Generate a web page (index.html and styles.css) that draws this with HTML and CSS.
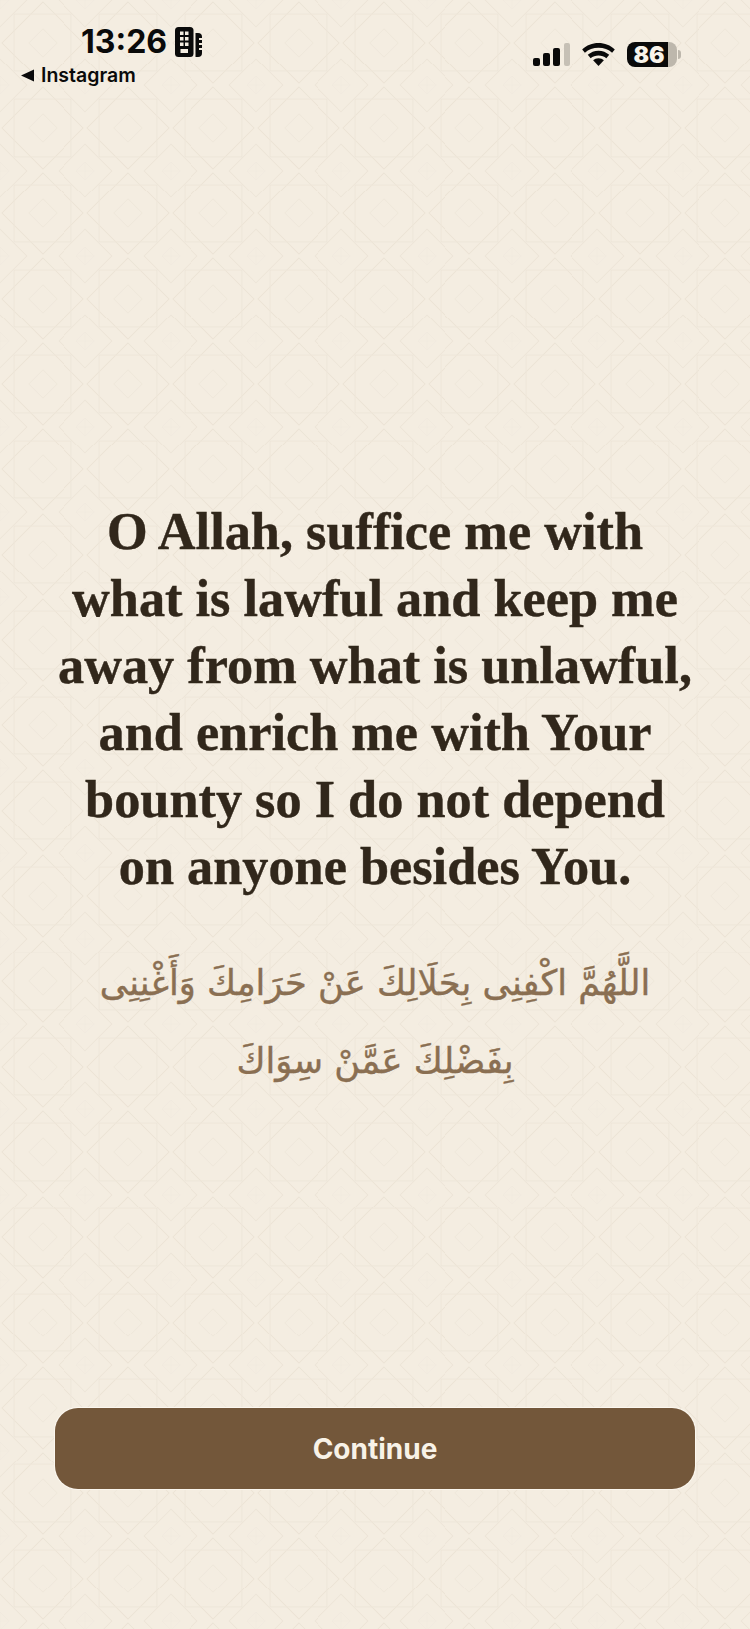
FILE: index.html
```html
<!DOCTYPE html>
<html lang="en">
<head>
    <meta charset="UTF-8">
    <meta name="viewport" content="width=device-width, initial-scale=1.0">
    <title>Dua</title>
    <link rel="stylesheet" href="styles.css">
</head>
<body>
    <div class="status-bar">
        <div class="status-left">
            <div class="time-row">
                <span class="time">13:26</span>
                <svg class="building" width="27" height="30" viewBox="0 0 27 30">
                    <rect x="0" y="0" width="18.500" height="30" rx="3.500" fill="#0a0a0a"/>
                    <path fill="#0a0a0a" d="M20.500 6h2.500a4 4 0 0 1 4 4v16a4 4 0 0 1-4 4h-2.500z"/>
                    <g fill="#f4ede1">
                        <rect x="5" y="4.500" width="3.500" height="3.500"/><rect x="10" y="4.500" width="3.500" height="3.500"/>
                        <rect x="5" y="10" width="3.500" height="3.500"/><rect x="10" y="10" width="3.500" height="3.500"/>
                        <rect x="5" y="15.500" width="3.500" height="3.500"/><rect x="10" y="15.500" width="3.500" height="3.500"/>
                        <rect x="5.500" y="22" width="7.500" height="4"/>
                        <rect x="24" y="11" width="3" height="2"/><rect x="24" y="16" width="3" height="2"/><rect x="24" y="21" width="3" height="2"/>
                    </g>
                </svg>
            </div>
            <div class="back-row">
                <svg width="13" height="13" viewBox="0 0 12 12"><path fill="#0a0a0a" d="M12 .500v11L0 6z"/></svg>
                <span>Instagram</span>
            </div>
        </div>
        <div class="status-right">
            <svg width="37" height="23" viewBox="0 0 37 23">
                <rect x="0" y="15" width="7" height="8" rx="2" fill="#0a0a0a"/>
                <rect x="10" y="10" width="7" height="13" rx="2" fill="#0a0a0a"/>
                <rect x="20" y="5" width="7" height="18" rx="2" fill="#0a0a0a"/>
                <rect x="31" y="0" width="6" height="23" rx="2" fill="#c6c0b5"/>
            </svg>
            <svg width="33" height="23" viewBox="0 0 34 24">
                <path fill="#0a0a0a" d="M17 0c6.500 0 12.500 2.500 17 6.700l-2.800 3.500C27.500 6.800 22.500 5 17 5S6.500 6.800 2.800 10.200L0 6.700C4.500 2.500 10.500 0 17 0z"/>
                <path fill="#0a0a0a" d="M17 8c4.300 0 8.100 1.600 11.200 4.300l-3 3.500C23 14 20.100 13 17 13s-6 1-8.200 2.800l-3-3.500C8.900 9.600 12.700 8 17 8z"/>
                <path fill="#0a0a0a" d="M17 16c2.200 0 4.200.800 5.600 2.100L17 24l-5.600-5.900c1.400-1.300 3.400-2.100 5.600-2.100z"/>
            </svg>
            <div class="battery">
                <div class="battery-body"><span>86</span></div>
                <div class="battery-tip"></div>
            </div>
        </div>
    </div>

    <main class="content">
        <h1 class="dua-english">O Allah, suffice me with<br>what is lawful and keep me<br>away from what is unlawful,<br>and enrich me with Your<br>bounty so I do not depend<br>on anyone besides You.</h1>
        <p class="dua-arabic" lang="ar" dir="rtl">اللَّهُمَّ اكْفِنِى بِحَلَالِكَ عَنْ حَرَامِكَ وَأَغْنِنِى<br>بِفَضْلِكَ عَمَّنْ سِوَاكَ</p>
    </main>

    <div class="footer">
        <button type="button" class="continue-btn">Continue</button>
    </div>
</body>
</html>
```

FILE: styles.css
```css
html, body {
    margin: 0;
    padding: 0;
}
body {
    width: 750px;
    height: 1629px;
    overflow: hidden;
    display: flex;
    flex-direction: column;
    background-color: #f4ede1;
    background-image: url("data:image/svg+xml,%3Csvg xmlns='http://www.w3.org/2000/svg' width='85.333' height='85.333' viewBox='0 0 256 256'%3E%3Cg fill='none' stroke-width='3'%3E%3Cpath stroke='%23ebe3d5' d='M128 6L250 128L128 250L6 128Z'/%3E%3Crect stroke='%23eee6d9' x='42' y='42' width='172' height='172'/%3E%3Cpath stroke='%23efe8db' d='M128 86L170 128L128 170L86 128Z'/%3E%3Cg stroke='%23ede5d8'%3E%3Cpath d='M0 -80L80 0L0 80L-80 0Z'/%3E%3Cpath d='M256 -80L336 0L256 80L176 0Z'/%3E%3Cpath d='M0 176L80 256L0 336L-80 256Z'/%3E%3Cpath d='M256 176L336 256L256 336L176 256Z'/%3E%3C/g%3E%3Cg stroke='%23f0e9de' stroke-width='2'%3E%3Cpath d='M0 -27L27 0L0 27L-27 0Z M-27 0H27 M0 -27V27'/%3E%3Cpath d='M256 -27L283 0L256 27L229 0Z M229 0H283 M256 -27V27'/%3E%3Cpath d='M0 229L27 256L0 283L-27 256Z M-27 256H27 M0 229V283'/%3E%3Cpath d='M256 229L283 256L256 283L229 256Z M229 256H283 M256 229V283'/%3E%3C/g%3E%3C/g%3E%3C/svg%3E");
    background-size: 85.333px 85.333px;
    font-family: Inter, "Liberation Sans", sans-serif;
    color: #0a0a0a;
}
.status-bar {
    display: flex;
    justify-content: space-between;
    align-items: flex-start;
    padding: 27px 69px 0 21px;
}
.time-row {
    display: flex;
    align-items: center;
    gap: 8px;
    padding-left: 60px;
}
.time {
    font-size: 32px;
    font-weight: 700;
    line-height: 30px;
}
.back-row {
    display: flex;
    align-items: center;
    gap: 7px;
    margin-top: 7px;
    font-size: 19.500px;
    font-weight: 600;
    line-height: 22px;
}
.status-right {
    display: flex;
    align-items: center;
    gap: 12px;
    padding-top: 15px;
}
.battery {
    display: flex;
    align-items: center;
    gap: 1px;
}
.battery-body {
    width: 50px;
    height: 25px;
    border-radius: 8px;
    background: linear-gradient(90deg, #0a0a0a 0 83%, #bdb7ac 83%);
    display: flex;
    align-items: center;
    justify-content: center;
    padding-right: 6px;
    box-sizing: border-box;
    color: #f8f3ea;
    font-size: 23px;
    font-weight: 900;
}
.battery-tip {
    width: 3px;
    height: 9px;
    border-radius: 0 3px 3px 0;
    background-color: #bdb7ac;
}
.content {
    flex: 1;
    display: flex;
    flex-direction: column;
    align-items: center;
    padding-top: 412px;
}
.dua-english {
    margin: 0;
    font-family: "Liberation Serif", serif;
    font-size: 52.300px;
    font-weight: 700;
    line-height: 67px;
    text-align: center;
    color: #31271b;
    -webkit-text-stroke: 0.4px #31271b;
}
.dua-arabic {
    margin: 44px 0 0;
    font-family: "DejaVu Sans", sans-serif;
    font-size: 35.300px;
    line-height: 78px;
    text-align: center;
    color: #8a6f52;
    -webkit-text-stroke: 0.4px #8a6f52;
}
.footer {
    padding: 0 55px 140px;
}
.continue-btn {
    display: block;
    width: 100%;
    height: 81px;
    border: none;
    border-radius: 23px;
    background-color: #73573a;
    box-shadow: 0 0 0 1px #fbf7ef;
    color: #f8f2e7;
    font-family: Inter, "Liberation Sans", sans-serif;
    font-size: 28px;
    font-weight: 700;
}
```
